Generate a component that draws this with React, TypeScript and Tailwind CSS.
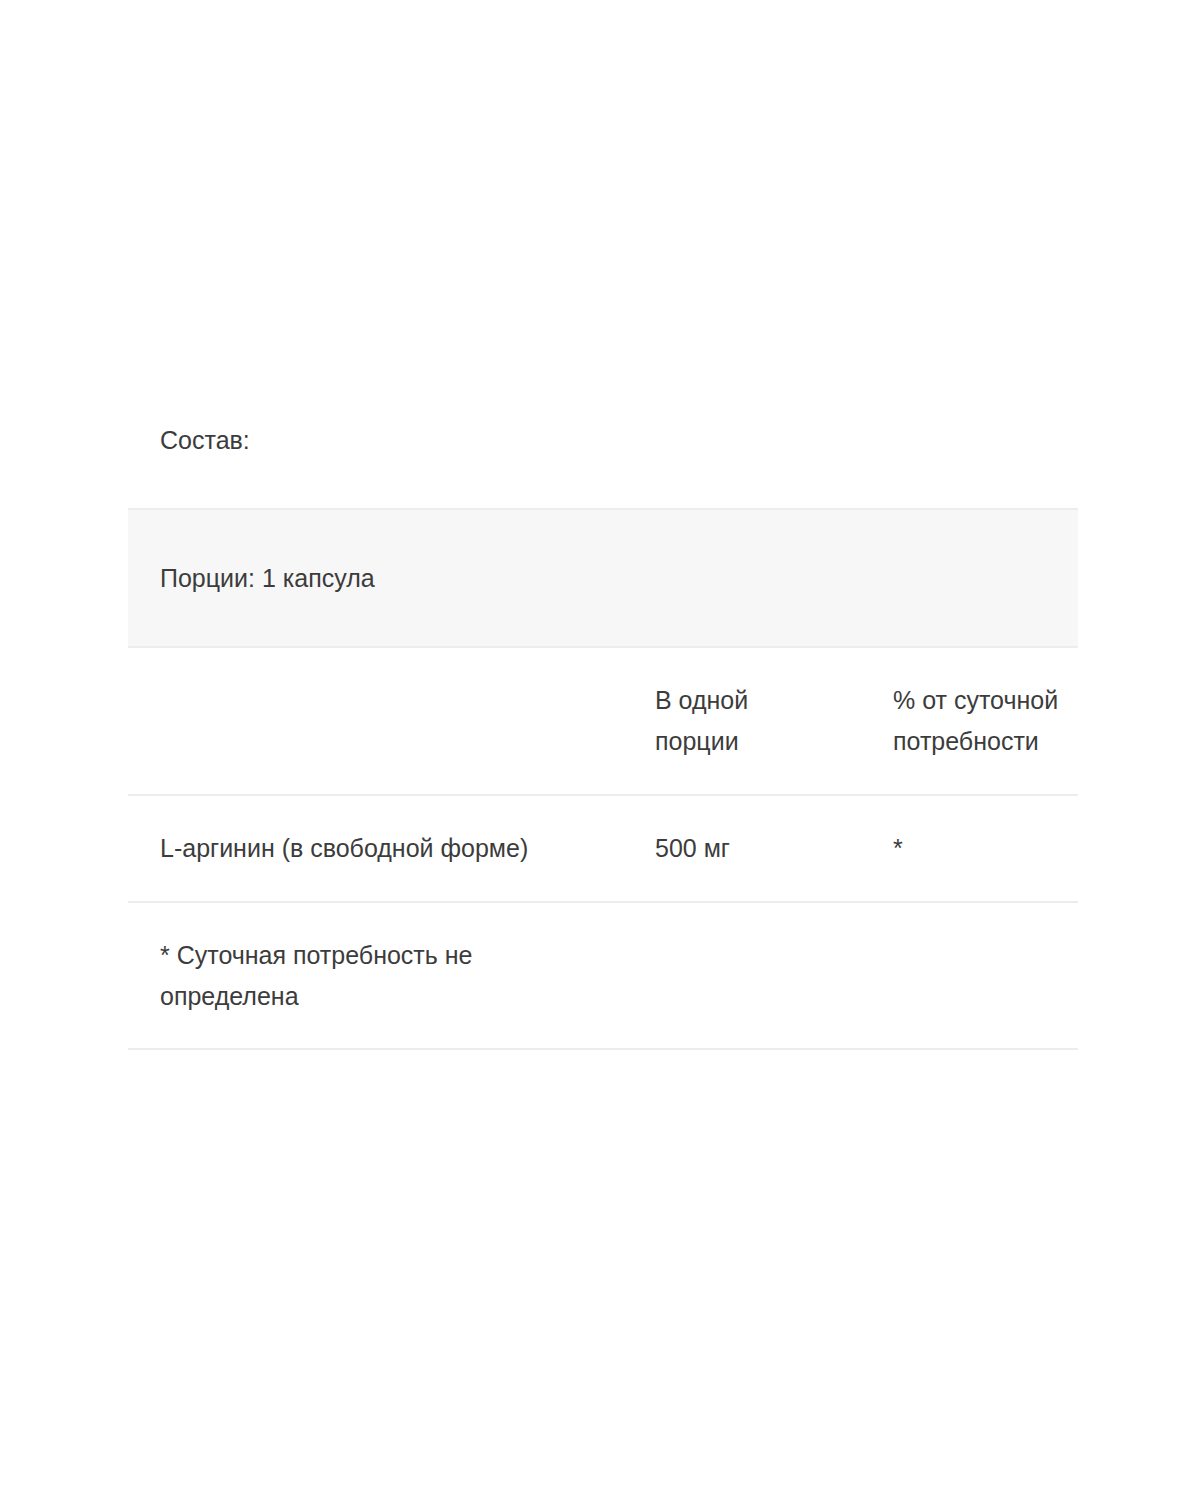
const rows = [
  { name: 'L-аргинин (в свободной форме)', amount: '500 мг', dv: '*' },
];

export default function App() {
  return (
    <div
      className="min-h-[1500px] bg-white pt-[372px] text-[25px] leading-[41px] text-[#3c3c3c]"
      style={{ fontFamily: '"Liberation Sans", Arial, sans-serif' }}
    >
      <div className="mx-[128px] w-[950px]">
        {/* Заголовок */}
        <div className="flex h-[136px] items-center px-8">
          <span>Состав:</span>
        </div>

        <table className="w-full table-fixed border-collapse">
          <colgroup>
            <col className="w-[495px]" />
            <col className="w-[238px]" />
            <col className="w-[217px]" />
          </colgroup>
          <tbody>
            <tr className="h-[138px] border-y-2 border-[#ededed] bg-[#f7f7f7]">
              <td colSpan={3} className="px-8 align-middle">
                Порции: 1 капсула
              </td>
            </tr>
            <tr className="h-[148px] border-b-2 border-[#ededed]">
              <td className="px-8"></td>
              <td className="px-8 align-middle">В одной порции</td>
              <td className="pl-8 pr-2 align-middle">% от суточной потребности</td>
            </tr>
            {rows.map((r) => (
              <tr key={r.name} className="h-[107px] border-b-2 border-[#ededed]">
                <td className="px-8 align-middle">{r.name}</td>
                <td className="px-8 align-middle">{r.amount}</td>
                <td className="px-8 align-middle">{r.dv}</td>
              </tr>
            ))}
            <tr className="h-[147px] border-b-2 border-[#ededed]">
              <td className="px-8 align-middle">* Суточная потребность не определена</td>
              <td></td>
              <td></td>
            </tr>
          </tbody>
        </table>
      </div>
    </div>
  );
}
